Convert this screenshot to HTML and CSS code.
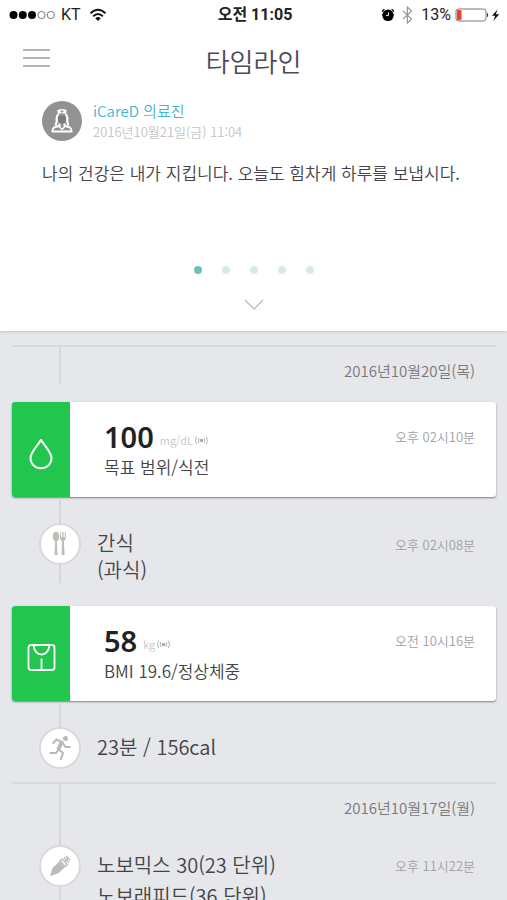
FILE: index.html
```html
<!DOCTYPE html>
<html lang="ko">
<head>
<meta charset="utf-8">
<meta name="viewport" content="width=device-width, initial-scale=1">
<title>타임라인</title>
<link rel="stylesheet" href="styles.css">
</head>
<body>
<svg class="defs" aria-hidden="true">
  <symbol id="signal" viewBox="0 0 16 10">
    <circle cx="8" cy="5" r="2" fill="currentColor"/>
    <path d="M5.2 2.2Q3.4 5 5.2 7.8M10.8 2.2Q12.6 5 10.8 7.8M2.6 1Q0 5 2.6 9M13.4 1Q16 5 13.4 9" fill="none" stroke="currentColor"/>
  </symbol>
</svg>
<div class="app">
  <header class="top">
    <div class="status">
      <div class="status-side">
        <svg width="47" height="12" viewBox="0 0 47 12" aria-hidden="true">
          <g fill="#000"><circle cx="4.5" cy="6" r="4"/><circle cx="13.8" cy="6" r="4"/><circle cx="23" cy="6" r="4"/></g>
          <g fill="none" stroke="#777"><circle cx="32.5" cy="6" r="3.6"/><circle cx="41.8" cy="6" r="3.6"/></g>
        </svg>
        <span class="carrier">KT</span>
        <svg width="18" height="14" viewBox="0 0 18 14" aria-hidden="true">
          <path d="M1.5 5.3Q9-1.8 16.5 5.3M4.2 8.2Q9 3.7 13.8 8.2" fill="none" stroke="#111" stroke-width="2"/>
          <path d="M6.2 10.2Q9 7.8 11.8 10.2L9 13z" fill="#111"/>
        </svg>
      </div>
      <strong class="clock">오전 11:05</strong>
      <div class="status-side status-right">
        <svg width="14" height="14" viewBox="0 0 14 14" aria-hidden="true">
          <circle cx="7" cy="7.3" r="5.8" fill="#000"/>
          <path d="M1 3.5 3.4 1.3M10.6 1.3 13 3.5" stroke="#111" stroke-width="1.3"/>
          <path d="M7.4 4.5v3.1H5" fill="none" stroke="#fff"/>
        </svg>
        <svg class="bluetooth" width="11" height="18" viewBox="0 0 11 18" aria-hidden="true">
          <path d="M1 5l8.6 8-4.2 4V1l4.2 4L1 13" fill="none" stroke="#999" stroke-width="1.2"/>
        </svg>
        <span class="percent">13%</span>
        <svg width="46" height="14" viewBox="0 0 46 14" aria-hidden="true">
          <rect x="1" y="1" width="30" height="12" rx="2.5" fill="#fff" stroke="#777"/>
          <rect x="2" y="2" width="4.5" height="10" rx="1" fill="#fb3b30"/>
          <path d="M32 4.5q2.4 2.5 0 5z" fill="#333"/>
          <path d="M42.5 1.5 37 7.8h3.2L38.3 13l6-6.7h-3.4z" fill="#111"/>
        </svg>
      </div>
    </div>
    <div class="nav">
      <button class="menu" type="button" aria-label="메뉴"><span></span><span></span><span></span></button>
      <h1>타임라인</h1>
    </div>
    <article class="message">
      <div class="author">
        <svg width="40" height="40" viewBox="0 0 40 40" aria-hidden="true">
          <circle cx="20" cy="20" r="20" fill="#929292"/>
          <path d="M16.2 13 15.2 9.2Q20 6.800 24.800 9.200L23.800 13Q20 11.600 16.200 13z" fill="#fff"/>
          <path d="M20 8.800v3M18.500 10.300h3" stroke="#929292"/>
          <path d="M16 13Q14 17 14.800 20.500L13.500 24.500M24 13Q26 17 25.200 20.500L26.500 24.500" fill="none" stroke="#fff" stroke-width="2.200"/>
          <path d="M16 15.500Q20 13.800 24 15.500V18Q23.500 22 20 23 16.500 22 16 18z" fill="#7c7c7c"/>
          <path d="M17.500 22.500v2.300L12 26.500q-1.600 1-1.500 4h19q.1-3-1.500-4l-5.500-1.700v-2.300" fill="none" stroke="#fff" stroke-width="2"/>
          <path d="M16.500 25 20 28.500 23.500 25" fill="none" stroke="#fff" stroke-width="1.500"/>
        </svg>
        <div>
          <div class="name">iCareD 의료진</div>
          <time class="sent">2016년10월21일(금) 11:04</time>
        </div>
      </div>
      <p>나의 건강은 내가 지킵니다. 오늘도 힘차게 하루를 보냅시다.</p>
    </article>
    <div class="dots"><i class="on"></i><i></i><i></i><i></i><i></i></div>
    <button class="expand" type="button" aria-label="펼치기">
      <svg width="20" height="12" viewBox="0 0 20 12" aria-hidden="true"><path d="M1 1l9 9 9-9" fill="none" stroke="#bbb" stroke-width="1.3"/></svg>
    </button>
  </header>

  <main class="timeline">
    <section class="day">
      <div class="date stub"><span class="rail"></span><h2>2016년10월20일(목)</h2></div>
      <article class="card">
        <div class="badge">
          <svg width="26" height="32" viewBox="0 0 26 32" aria-hidden="true"><path d="M13 1.800C10 7.500 2.500 14 2.500 20.300a10.500 10 0 0 0 21 0C23.500 14 16 7.500 13 1.800z" fill="none" stroke="#fff" stroke-width="2" stroke-linejoin="round"/></svg>
        </div>
        <div class="reading">
          <div class="value"><strong>100</strong><span>mg/dL</span><svg width="15" height="9" aria-hidden="true"><use href="#signal"/></svg></div>
          <div class="detail">목표 범위/식전</div>
        </div>
        <time>오후 02시10분</time>
      </article>
      <article class="entry">
        <div class="rail">
          <span class="node">
            <svg width="16" height="26" viewBox="0 0 16 26" aria-hidden="true">
              <g fill="#c0bdb9"><ellipse cx="4" cy="5.500" rx="3.200" ry="4.700"/><path d="M3.200 9h1.600l.7 14.500q-1.500 1.500-3 0zM8 1h1v5h1.200V1h1.400v5h1.200V1h1v6q0 2.500-2 3.200l.8 13.300q-1.500 1.500-3 0L10 10.200Q8 9.500 8 7z"/></g>
            </svg>
          </span>
        </div>
        <p>간식<br>(과식)</p>
        <time>오후 02시08분</time>
      </article>
      <article class="card">
        <div class="badge">
          <svg width="30" height="28" viewBox="0 0 30 28" aria-hidden="true"><g fill="none" stroke="#fff" stroke-width="1.800"><rect x="2.500" y="1" width="26" height="25" rx="2.500"/><path d="M7.500 1.500Q9 10.300 15.500 10.600 22 10.300 23.500 1.500M15.500 14.500v11"/></g></svg>
        </div>
        <div class="reading">
          <div class="value"><strong>58</strong><span>kg</span><svg width="15" height="9" aria-hidden="true"><use href="#signal"/></svg></div>
          <div class="detail">BMI 19.6/정상체중</div>
        </div>
        <time>오전 10시16분</time>
      </article>
      <article class="entry last">
        <div class="rail">
          <span class="node">
            <svg width="24" height="26" viewBox="0 0 24 26" aria-hidden="true">
              <circle cx="17.500" cy="3.500" r="2.500" fill="#b9b9b9"/>
              <path d="M4.500 8.500 8.500 4.500 14 7 10.500 14.500 15 18 12.500 25M10.500 14.500 8 18H1.500M14.500 7.500l3 4.500h5" fill="none" stroke="#b9b9b9" stroke-width="2"/>
              <path d="M12 6l3.500 1.500-3.500 8-3.500-1.500z" fill="#b9b9b9"/>
            </svg>
          </span>
        </div>
        <p>23분 / 156cal</p>
      </article>
    </section>
    <section class="day">
      <div class="date"><span class="rail"></span><h2>2016년10월17일(월)</h2></div>
      <article class="entry doses">
        <div class="rail">
          <span class="node">
            <svg width="22" height="22" viewBox="0 0 22 22" aria-hidden="true">
              <path d="M1 21 3.500 13 10.500 6.500 16 12 9.500 18.200z" fill="#bbb"/>
              <path d="M11 6l5.500 5.500 2-2L13 4z" fill="#fff" stroke="#bbb" stroke-width="1.400"/>
              <path d="M15.500 7 19 3M15 2.500l5 5M17 1l4 4" stroke="#bbb" stroke-width="1.600"/>
            </svg>
          </span>
        </div>
        <p>노보믹스 30(23 단위)<br>노보래피드(36 단위)</p>
        <time>오후 11시22분</time>
      </article>
    </section>
  </main>
</div>
</body>
</html>
```
FILE: styles.css
```css
* { box-sizing: border-box; }

body {
  margin: 0;
  background: #e6e7eb;
  color: #444448;
  font-family: "Noto Sans CJK KR", sans-serif;
  font-weight: 350;
}

h1, h2, p { margin: 0; font-weight: 350; }
button { padding: 0; border: 0; background: none; }
svg { display: block; flex: none; }
.defs { position: absolute; width: 0; height: 0; }

.app {
  display: flex;
  flex-direction: column;
  height: 100vh;
  overflow: hidden;
}

/* Header */
.top {
  flex: none;
  height: 331px;
  background: #fff;
  box-shadow: 0 1px 3px rgba(0, 0, 0, .16);
}

.status {
  display: grid;
  grid-template-columns: 1fr auto 1fr;
  align-items: center;
  height: 30px;
  padding: 0 6px 0 9px;
  color: #222;
  line-height: 30px;
}
.status-side { display: flex; align-items: center; }
.status-right { justify-content: flex-end; }
.carrier, .percent { font: 400 16px/30px Roboto, sans-serif; }
.carrier { margin: 0 8px 0 5px; }
.percent { margin: 0 4px 0 8px; }
.bluetooth { margin-left: 7px; }
.clock { font-family: Roboto, "Noto Sans CJK KR", sans-serif; font-size: 16px; font-weight: 700; }

.nav {
  display: grid;
  grid-template-columns: 50px 1fr 50px;
  align-items: center;
  height: 62px;
}
.menu {
  display: grid;
  gap: 6px;
  width: 27px;
  margin: 0 0 6px 23px;
}
.menu span { height: 2px; background: #b4b4b4; }
h1 { font-size: 26px; line-height: 36px; text-align: center; color: #4b4c57; }

.message { padding: 8px 40px 0 42px; }
.author { display: flex; gap: 11px; align-items: center; }
.name { font-size: 15px; line-height: 22px; color: #45b5cf; }
.sent { display: block; font-size: 13px; line-height: 20px; color: #c4c4c4; }
.message p { margin-top: 18px; font-size: 17px; line-height: 26px; white-space: nowrap; }

.dots { display: flex; justify-content: center; gap: 20px; margin-top: 80px; }
.dots i { width: 8px; height: 8px; border-radius: 50%; background: #d5ece6; }
.dots .on { background: #6bc2bd; }
.expand { display: block; margin: 25px auto 0; }

/* Timeline */
.timeline { flex: 1; min-height: 0; padding: 14px 11px 0 12px; overflow: hidden; }
.day { border-top: 2px solid #d8d9dc; }

.date { display: flex; justify-content: space-between; height: 40px; }
.date .rail { margin-left: 27px; }
.date h2 { padding: 12px 21px 0 0; font-size: 15px; line-height: 24px; color: #77777c; }
.stub { height: 55px; }
.stub .rail { height: 37px; }

.card {
  display: flex;
  height: 95px;
  border-radius: 3px;
  background: #fff;
  box-shadow: 0 1px 2px rgba(0, 0, 0, .45);
}
.badge {
  display: grid;
  place-items: center;
  width: 58px;
  padding-top: 8px;
  border-radius: 3px 0 0 3px;
  background: #22c54d;
}
.reading { flex: 1; padding: 18px 0 0 34px; }
.value { display: flex; align-items: center; gap: 1px; height: 34px; color: #c8c8c8; font-size: 11px; }
.value strong { margin-right: 5px; color: #222; font-family: "Noto Sans", sans-serif; font-size: 29px; font-weight: 600; line-height: 34px; }
.value span, .value svg { margin-top: 6px; }
.value svg { color: #aaa; }
.detail { font-size: 17px; line-height: 25px; }
time { font-size: 13px; color: #a0a0a4; }
.card time { padding: 24px 21px 0 0; line-height: 22px; }

.entry { display: flex; min-height: 83px; margin: 3px 0 23px; }
.rail {
  display: flex;
  flex-direction: column;
  align-items: center;
  flex: none;
  width: 42px;
}
.entry .rail { margin: 0 16px 0 27px; }
.rail::before, .entry .rail::after { content: ""; width: 2px; background: #d5d6d9; }
.rail::before { flex: 1; }
.entry .rail::before { flex: none; height: 23px; }
.entry .rail::after { flex: 1; }
.node {
  display: grid;
  place-items: center;
  width: 42px;
  height: 42px;
  border: 2px solid #d9d9da;
  border-radius: 50%;
  background: #fff;
}
.entry p { flex: 1; padding-top: 29px; font-size: 20px; line-height: 27px; }
.entry time { padding: 34px 21px 0 0; line-height: 22px; }
.last { min-height: 0; margin-bottom: 13px; }
.last p { padding-top: 29px; }
.doses { min-height: 140px; margin: 0; }
.doses .rail::before { height: 21px; }
.doses p { padding-top: 25px; line-height: 31px; }
.doses time { padding-top: 31px; }
```
